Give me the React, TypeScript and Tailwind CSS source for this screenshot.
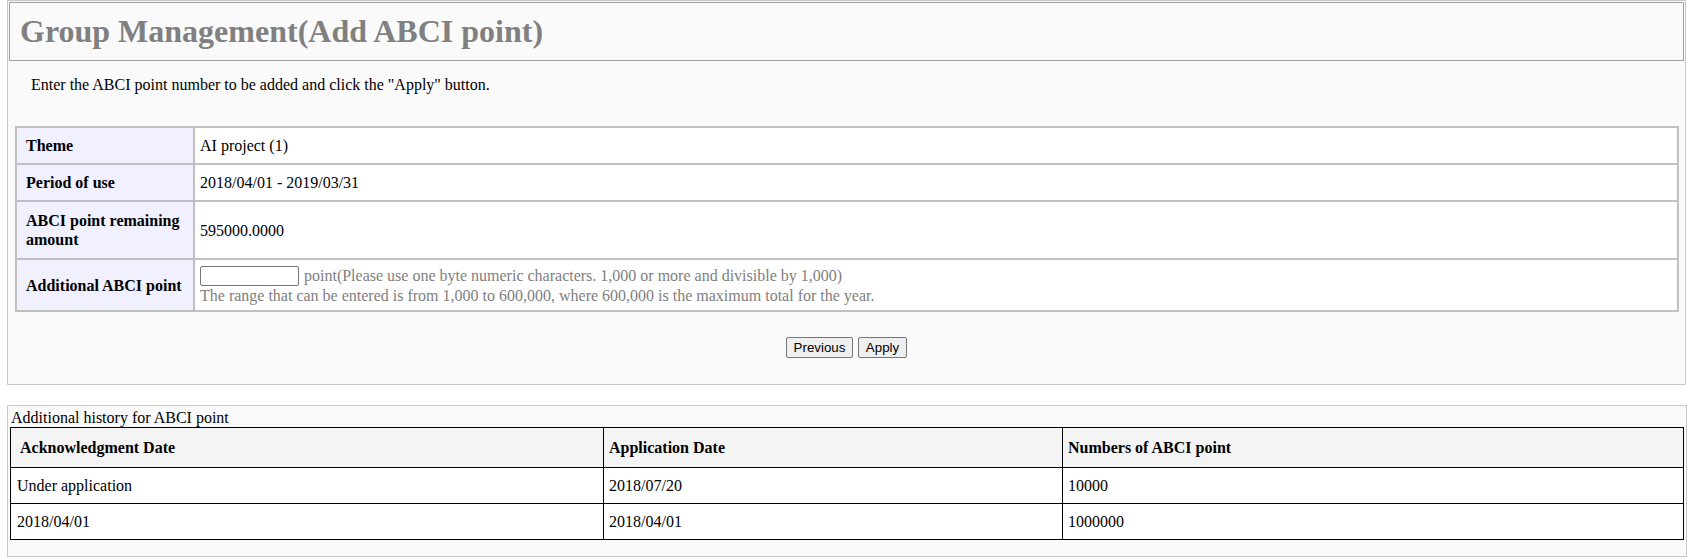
import React from 'react';

const infoRows = [
  { label: 'Theme', value: 'AI project (1)', h: 'h-[35px]' },
  { label: 'Period of use', value: '2018/04/01 - 2019/03/31', h: 'h-[35px]' },
  { label: 'ABCI point remaining amount', value: '595000.0000', h: 'h-[56px]' },
];

const history = [
  { ack: 'Under application', applied: '2018/07/20', points: '10000' },
  { ack: '2018/04/01', applied: '2018/04/01', points: '1000000' },
];

export default function App() {
  return (
    <div className="min-h-screen bg-white text-black text-[16px] font-['Liberation_Serif',serif]">
      {/* Add point panel */}
      <div className="ml-[7px] w-[1679px] h-[385px] border border-[#c8c8c8] bg-[#fafafa] p-px">
        <div className="h-[59px] border border-[#a0a0a0] pl-[10px] pt-[10px]">
          <h1 className="text-[32px] leading-[36px] font-bold text-[#808080]">Group Management(Add ABCI point)</h1>
        </div>

        <p className="mt-[15px] pl-[22px] leading-[18px]">
          Enter the ABCI point number to be added and click the "Apply" button.
        </p>

        <div className="mt-[32px] ml-[6px] w-[1664px] grid grid-cols-[176px_1fr] gap-[2px] p-[2px] bg-[#c0c0c0]">
          {infoRows.map((row) => (
            <React.Fragment key={row.label}>
              <div className={`${row.h} bg-[#f0f0ff] pl-[9px] pr-[4px] flex items-center font-bold leading-[19px]`}>
                {row.label}
              </div>
              <div className={`${row.h} bg-white pl-[5px] flex items-center leading-[19px]`}>{row.value}</div>
            </React.Fragment>
          ))}
          <div className="h-[50px] bg-[#f0f0ff] pl-[9px] flex items-center font-bold leading-[19px]">
            Additional ABCI point
          </div>
          <div className="h-[50px] bg-white pl-[5px] flex flex-col justify-center text-[#808080]">
            <div className="flex items-center h-[21px]">
              <input
                type="text"
                className="w-[99px] h-[20px] border border-[#767676] rounded-[2px] bg-white outline-none"
              />
              <span className="ml-[5px] leading-[19px]">
                point(Please use one byte numeric characters. 1,000 or more and divisible by 1,000)
              </span>
            </div>
            <div className="leading-[19px]">
              The range that can be entered is from 1,000 to 600,000, where 600,000 is the maximum total for the year.
            </div>
          </div>
        </div>

        <div className="mt-[25px] flex justify-center gap-[5px] font-['Liberation_Sans',sans-serif] text-[13.33px]">
          <button type="button" className="w-[67px] h-[21px] bg-[#efefef] border border-[#767676] rounded-[2px] leading-none">
            Previous
          </button>
          <button type="button" className="w-[49px] h-[21px] bg-[#efefef] border border-[#767676] rounded-[2px] leading-none">
            Apply
          </button>
        </div>
      </div>

      {/* History panel */}
      <div className="mt-[20px] ml-[7px] w-[1680px] h-[152px] border border-[#c8c8c8] bg-[#fafafa] px-[2px]">
        <div className="pl-px pt-[2px] h-[21px] leading-[19px]">Additional history for ABCI point</div>
        <div className="w-[1674px] grid grid-cols-[592px_458px_1fr] gap-px p-px bg-black">
          <div className="h-[39px] bg-[#f4f4f4] pl-[9px] flex items-center font-bold">Acknowledgment Date</div>
          <div className="h-[39px] bg-[#f4f4f4] pl-[5px] flex items-center font-bold">Application Date</div>
          <div className="h-[39px] bg-[#f4f4f4] pl-[5px] flex items-center font-bold">Numbers of ABCI point</div>
          {history.map((h, i) => (
            <React.Fragment key={i}>
              <div className="h-[35px] bg-white pl-[6px] flex items-center">{h.ack}</div>
              <div className="h-[35px] bg-white pl-[5px] flex items-center">{h.applied}</div>
              <div className="h-[35px] bg-white pl-[5px] flex items-center">{h.points}</div>
            </React.Fragment>
          ))}
        </div>
      </div>
    </div>
  );
}
